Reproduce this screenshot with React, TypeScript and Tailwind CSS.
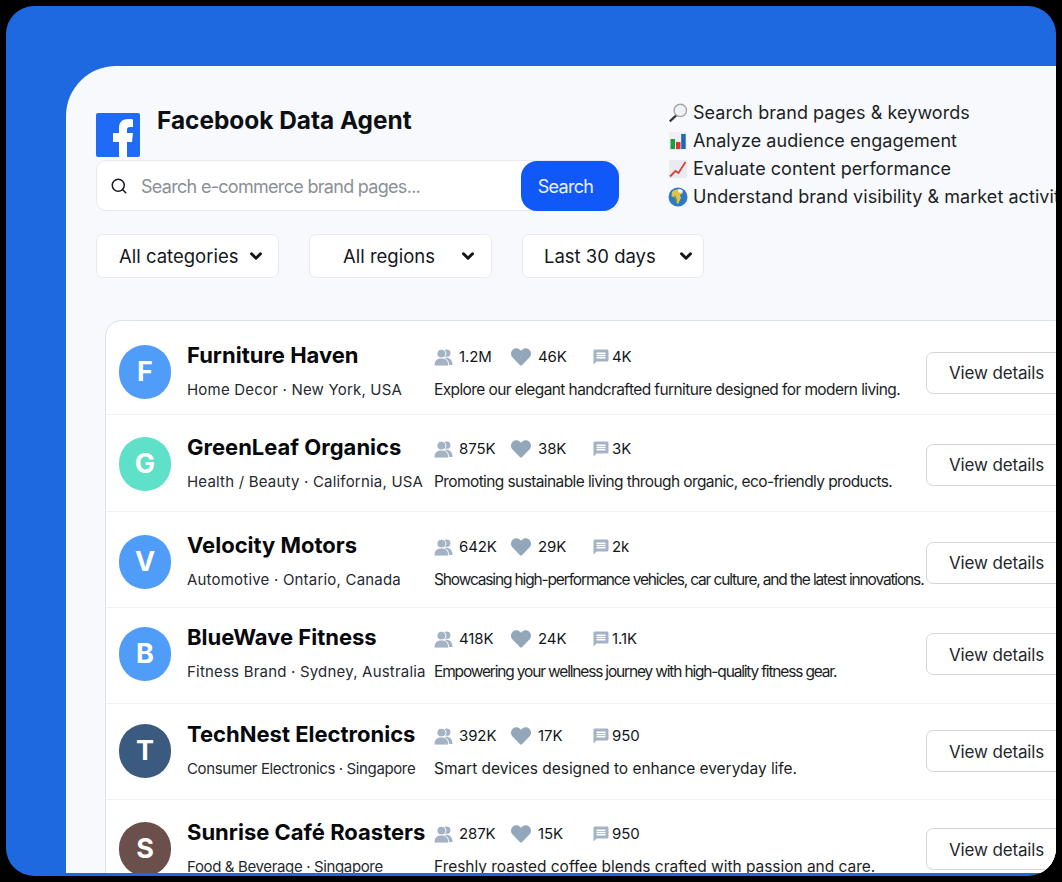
import { ChevronDown, Search } from "lucide-react";
import { FaHeart } from "react-icons/fa";
import { MdMessage } from "react-icons/md";

type Brand = {
  name: string;
  letter: string;
  avatar: string;
  meta: string;
  metaClass: string;
  fans: string;
  likes: string;
  comments: string;
  about: string;
  aboutClass: string;
  rowClass: string;
  buttonClass: string;
};

const BRANDS: Brand[] = [
  {
    name: "Furniture Haven",
    letter: "F",
    avatar: "bg-[#4f9cf9]",
    meta: "Home Decor · New York, USA",
    metaClass: "tracking-[0.2px]",
    fans: "1.2M",
    likes: "46K",
    comments: "4K",
    about: "Explore our elegant handcrafted furniture designed for modern living.",
    aboutClass: "tracking-[-0.6px]",
    rowClass: "h-[94px] pt-[20px]",
    buttonClass: "mt-[1px]",
  },
  {
    name: "GreenLeaf Organics",
    letter: "G",
    avatar: "bg-[#5fe0c8]",
    meta: "Health / Beauty · California, USA",
    metaClass: "tracking-[0.2px]",
    fans: "875K",
    likes: "38K",
    comments: "3K",
    about: "Promoting sustainable living through organic, eco-friendly products.",
    aboutClass: "tracking-[-0.6px]",
    rowClass: "h-[97px] pt-[18px]",
    buttonClass: "mt-[1px]",
  },
  {
    name: "Velocity Motors",
    letter: "V",
    avatar: "bg-[#4f9cf9]",
    meta: "Automotive · Ontario, Canada",
    metaClass: "tracking-[0.2px]",
    fans: "642K",
    likes: "29K",
    comments: "2k",
    about: "Showcasing high-performance vehicles, car culture, and the latest innovations.",
    aboutClass: "tracking-[-1.15px]",
    rowClass: "h-[96px] pt-[19px]",
    buttonClass: "mt-[1px]",
  },
  {
    name: "BlueWave Fitness",
    letter: "B",
    avatar: "bg-[#4f9cf9]",
    meta: "Fitness Brand · Sydney, Australia",
    metaClass: "tracking-[0.2px]",
    fans: "418K",
    likes: "24K",
    comments: "1.1K",
    about: "Empowering your wellness journey with high-quality fitness gear.",
    aboutClass: "tracking-[-1.17px]",
    rowClass: "h-[96px] pt-[15px]",
    buttonClass: "",
  },
  {
    name: "TechNest Electronics",
    letter: "T",
    avatar: "bg-[#3b5a80]",
    meta: "Consumer Electronics · Singapore",
    metaClass: "tracking-[-0.38px]",
    fans: "392K",
    likes: "17K",
    comments: "950",
    about: "Smart devices designed to enhance everyday life.",
    aboutClass: "tracking-[-0.04px]",
    rowClass: "h-[96px] pt-[16px]",
    buttonClass: "",
  },
  {
    name: "Sunrise Café Roasters",
    letter: "S",
    avatar: "bg-[#6a4f4b]",
    meta: "Food & Beverage · Singapore",
    metaClass: "tracking-[-0.36px]",
    fans: "287K",
    likes: "15K",
    comments: "950",
    about: "Freshly roasted coffee blends crafted with passion and care.",
    aboutClass: "tracking-[-0.03px]",
    rowClass: "h-[96px] pt-[18px]",
    buttonClass: "",
  },
];

const FacebookLogo = () => (
  <svg width="44" height="44" viewBox="0 0 44 44" className="shrink-0">
    <rect width="44" height="44" rx="2" fill="#1f6bf5" />
    <path
      d="M23 44V29h-6v-9h6v-5c0-6 3.600-9 9-9 1.800 0 3.600.2 5 .4v7.600h-3c-2.400 0-3 1.200-3 3V20h6l-1 9h-5v15z"
      fill="#fff"
    />
  </svg>
);

const UsersIcon = () => (
  <svg width="19" height="19" viewBox="0 0 20 20" className="shrink-0">
    <circle cx="13.500" cy="5.500" r="3.800" fill="#a3b3c5" />
    <path d="M11 10.500c4.500-1 8.500 1.500 8.500 7.500h-4z" fill="#a3b3c5" />
    <circle cx="7.800" cy="6" r="4.700" fill="#a3b3c5" stroke="#fff" strokeWidth="1" />
    <path d="M0 19c0-6 3-8.500 7.800-8.500s7.700 2.500 7.700 8.500z" fill="#a3b3c5" stroke="#fff" strokeWidth="1" />
  </svg>
);

const MagnifierEmoji = () => (
  <svg width="20" height="20" viewBox="0 0 20 20" className="shrink-0">
    <path d="M8.500 10.500 1 17.500l1.600 1.700 7.400-7z" fill="#3a3a3a" />
    <circle cx="12.300" cy="7.400" r="6.200" fill="#eef3f7" stroke="#a9a59c" strokeWidth="1.400" />
  </svg>
);

const BarsEmoji = () => (
  <svg width="20" height="20" viewBox="0 0 20 20" className="shrink-0">
    <rect x="1" y="1" width="18" height="18" fill="#eef0f4" />
    <rect x="2.500" y="8" width="4.500" height="10" fill="#1f9d3c" />
    <rect x="8" y="11" width="4.500" height="7" fill="#d8362a" />
    <rect x="13.200" y="3" width="4.500" height="15" fill="#2467b0" />
  </svg>
);

const TrendEmoji = () => (
  <svg width="20" height="20" viewBox="0 0 20 20" className="shrink-0">
    <rect x="1" y="1" width="18" height="18" fill="#e9ebf0" />
    <path d="M2 17.500 7.500 12l3 2L17.500 3" fill="none" stroke="#d8403a" strokeWidth="1.800" />
  </svg>
);

const GlobeEmoji = () => (
  <svg width="20" height="20" viewBox="0 0 20 20" className="shrink-0">
    <circle cx="10" cy="10" r="9.500" fill="#2f78c4" />
    <path d="M4 5c2-3 7-3.500 10-2l1 3-3 2 1 3-3 6c-2-1-2-4-3-6L3.500 9z" fill="#e3c04a" />
    <path d="M10 2.500c2-.5 4 .2 5 1.500l-2 2-3-1z" fill="#f1f5f9" />
    <path d="M6 8l2 2 1 4-1 2z" fill="#4a9a3f" />
  </svg>
);

const FilterButton = ({
  label,
  widthClass,
  textClass,
  chevronClass,
}: {
  label: string;
  widthClass: string;
  textClass: string;
  chevronClass: string;
}) => (
  <div className={`flex h-[44px] items-center rounded-[7px] border border-[#e6eaf0] bg-white ${widthClass}`}>
    <span className={`pt-[1px] text-[18.500px] text-[#14171c] ${textClass}`}>{label}</span>
    <ChevronDown className={`size-[18px] text-[#14171c] ${chevronClass}`} strokeWidth={4} />
  </div>
);

const BrandRow = ({ brand, last }: { brand: Brand; last: boolean }) => (
  <div className={`${brand.rowClass} ${last ? "" : "border-b border-[#eff2f6]"} pl-[13px]`}>
    <div className="flex h-[62px] items-center">
      <div
        className={`${brand.avatar} flex h-[54px] w-[52px] shrink-0 items-center justify-center rounded-full text-[27px] font-bold text-white`}
      >
        {brand.letter}
      </div>
      <div className="ml-[16px] w-[247px] shrink-0">
        <div className="-mt-[1px] h-[29px] whitespace-nowrap text-[22px] leading-[28px] font-bold text-[#06080c]">
          {brand.name}
        </div>
        <div className={`mt-[8px] h-[24px] whitespace-nowrap text-[15px] leading-[24px] text-[#262a30] ${brand.metaClass}`}>
          {brand.meta}
        </div>
      </div>
      <div className="w-[492px] shrink-0">
        <div className="flex h-[28px] items-center pt-[2px] text-[15px] tracking-[-0.1px] text-[#14171c]">
          <div className="flex w-[77px] items-center">
            <UsersIcon />
            <span className="ml-[6px]">{brand.fans}</span>
          </div>
          <div className="flex w-[82px] items-center">
            <FaHeart className="size-[20px] shrink-0 text-[#93a7bb]" />
            <span className="ml-[7px]">{brand.likes}</span>
          </div>
          <div className="-ml-[1px] flex items-center">
            <MdMessage className="size-[18px] shrink-0 text-[#a3b3c5]" />
            <span className="ml-[2px]">{brand.comments}</span>
          </div>
        </div>
        <div className={`mt-[8px] h-[24px] whitespace-nowrap text-[15.500px] leading-[24px] text-[#1b1e23] ${brand.aboutClass}`}>
          {brand.about}
        </div>
      </div>
      <button
        className={`h-[42px] w-[150px] shrink-0 rounded-[7px] border border-[#d3d7dc] bg-white pt-[3px] pl-[22px] text-left text-[17px] tracking-[-0.15px] text-[#24272c] ${brand.buttonClass}`}
      >
        View details
      </button>
    </div>
  </div>
);

export default function App() {
  return (
    <div className="h-[882px] w-[1062px] overflow-hidden bg-black p-[6px] font-['Inter',sans-serif]">
      <div className="h-[870px] w-[1050px] overflow-hidden rounded-[28px] bg-[#1f69e0] pt-[60px] pl-[60px]">
        <div className="h-[807px] overflow-hidden rounded-tl-[50px] bg-[#f7f9fd] pt-[32px] pl-[30px]">
          <div className="flex items-start">
            <div className="w-[523px] shrink-0 pt-[15px]">
              <div className="flex items-start gap-[17px]">
                <FacebookLogo />
                <h1 className="whitespace-nowrap text-[24.400px] leading-[14px] font-bold text-[#0c0f14]">
                  Facebook Data Agent
                </h1>
              </div>
              <div className="mt-[3px] flex h-[51px] items-center rounded-[10px] border border-[#e6e9ef] bg-white">
                <Search className="ml-[13px] size-[18px] text-[#16191e]" strokeWidth={2} />
                <span className="ml-[13px] flex-1 pt-[2px] text-[18px] tracking-[-0.7px] text-[#8b8f96]">
                  Search e-commerce brand pages...
                </span>
                <button className="-mr-[1px] h-[50px] w-[98px] rounded-[16px] bg-[#1158f8] pt-[2px] pr-[9px] text-[18px] tracking-[-0.7px] text-[#eaf1ff]">
                  Search
                </button>
              </div>
            </div>
            <ul className="-ml-[1px] shrink-0 pt-[0.5px] pl-[50px] text-[18px] leading-[28px] tracking-[0.05px] whitespace-nowrap text-[#1c1f24]">
              <li className="flex items-center gap-[5px]">
                <MagnifierEmoji />
                Search brand pages &amp; keywords
              </li>
              <li className="flex items-center gap-[5px]">
                <BarsEmoji />
                Analyze audience engagement
              </li>
              <li className="flex items-center gap-[5px]">
                <TrendEmoji />
                Evaluate content performance
              </li>
              <li className="flex items-center gap-[5px]">
                <GlobeEmoji />
                Understand brand visibility &amp; market activity
              </li>
            </ul>
          </div>

          <div className="mt-[23px] flex gap-[30px]">
            <FilterButton label="All categories" widthClass="w-[183px]" textClass="ml-[22px]" chevronClass="ml-[9px]" />
            <FilterButton label="All regions" widthClass="w-[183px]" textClass="ml-[33px]" chevronClass="ml-[24px]" />
            <FilterButton label="Last 30 days" widthClass="w-[182px]" textClass="ml-[21px]" chevronClass="ml-[21px]" />
          </div>

          <div className="mt-[42px] ml-[9px] w-[1100px] rounded-tl-[16px] border border-[#d8e4ee] bg-white">
            {BRANDS.map((brand, i) => (
              <BrandRow key={brand.name} brand={brand} last={i === BRANDS.length - 1} />
            ))}
          </div>
        </div>
      </div>
    </div>
  );
}
